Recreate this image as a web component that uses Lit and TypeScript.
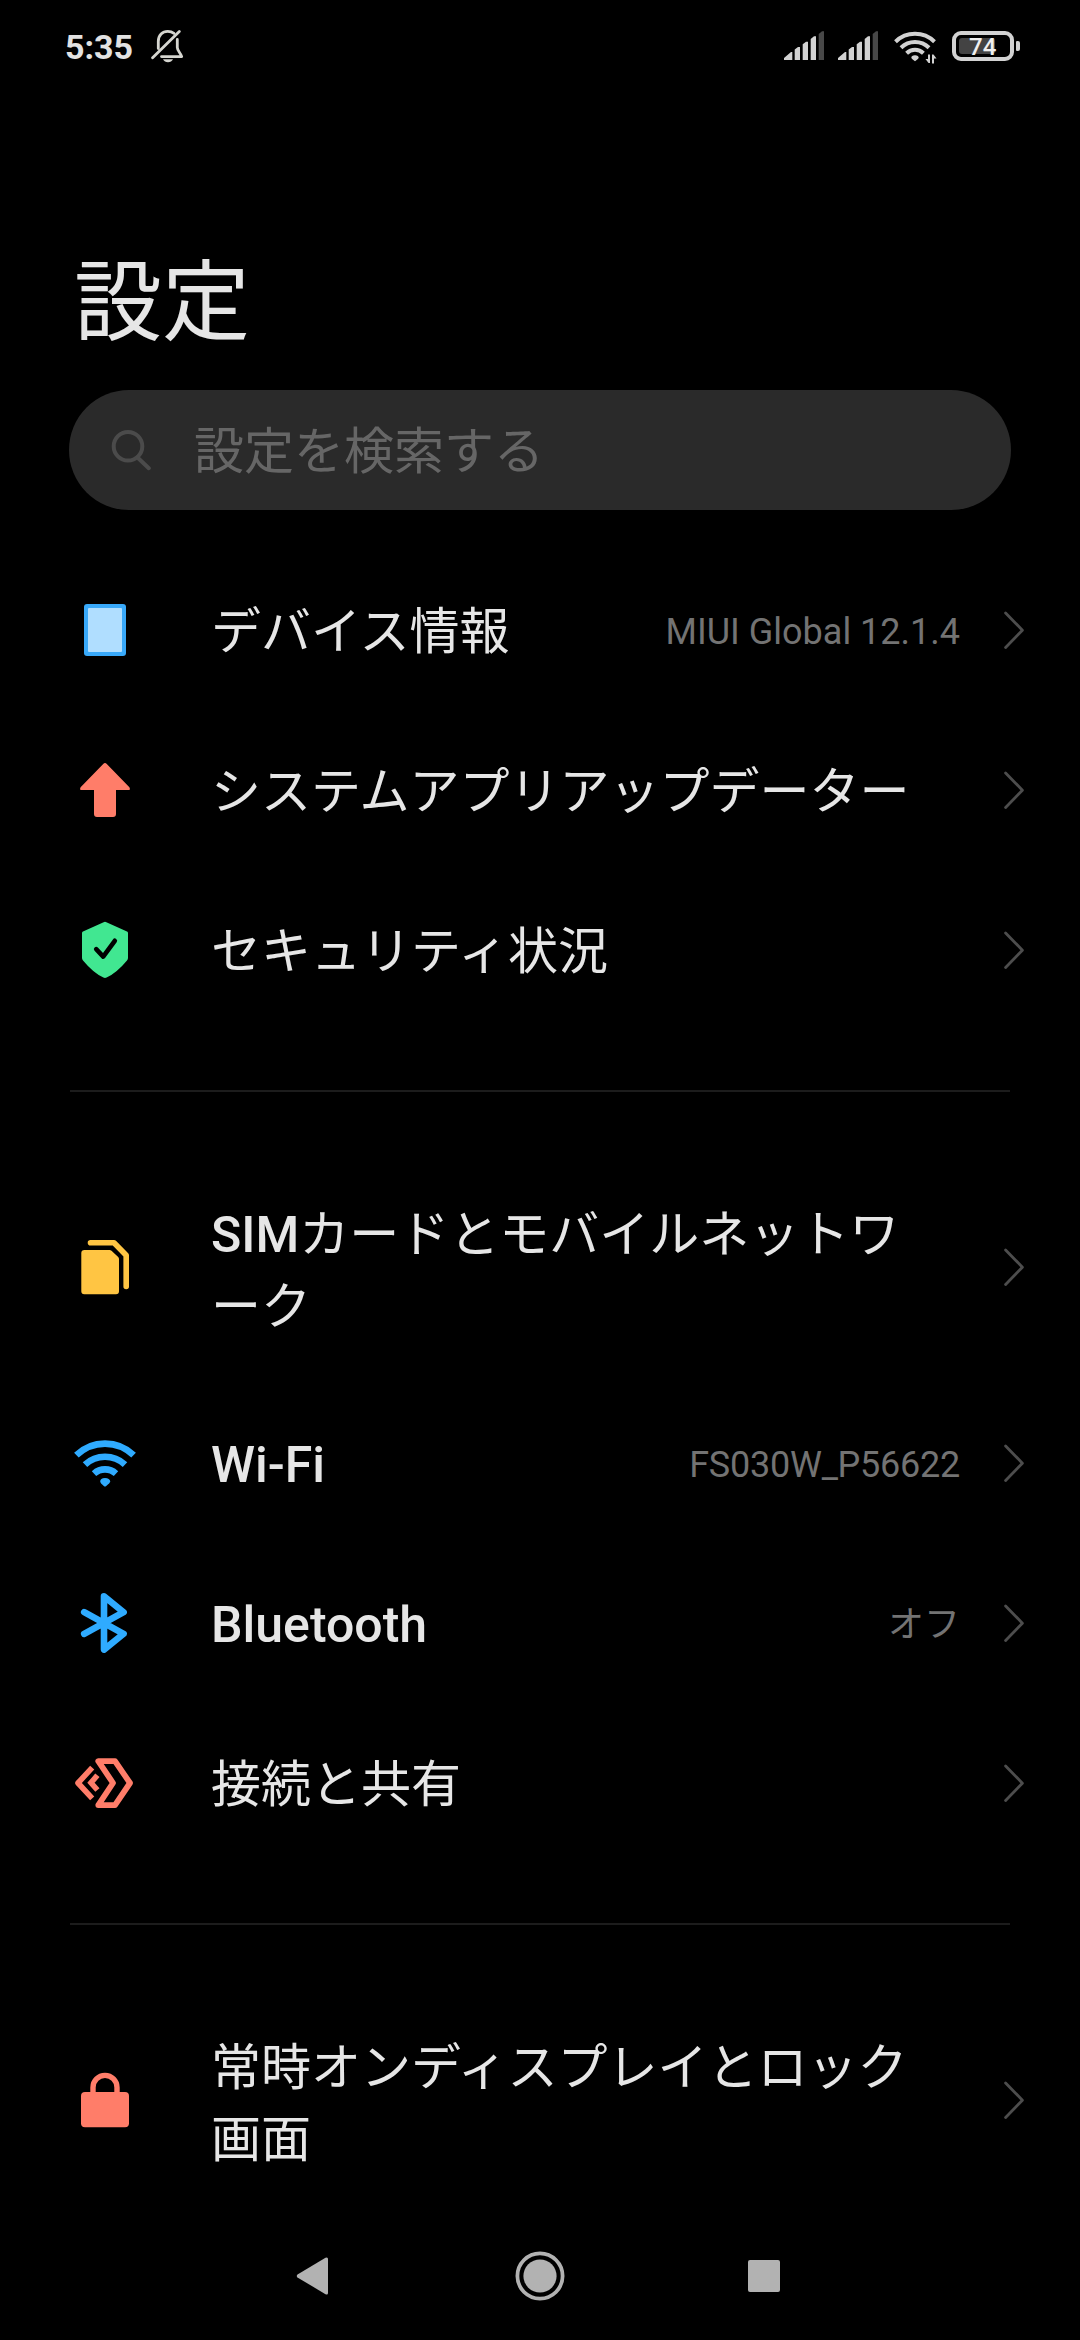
import { LitElement, html, svg, css, nothing, TemplateResult } from "lit";
import { customElement, property } from "lit/decorators.js";
import { classMap } from "lit/directives/class-map.js";

const icons: Record<string, TemplateResult> = {
  device: svg`
    <rect x="15" y="10" width="42" height="52" rx="3" fill="#38a9fa"/>
    <rect x="19" y="14" width="34" height="44" rx="1" fill="#b0deff"/>`,
  update: svg`
    <path fill="#ff7d69" d="M34.2 9.9Q36 8.2 37.8 9.9L60.4 33.2Q61.8 36 59.5 36H47V60Q47 63 44 63H28Q25 63 25 60V36H12.5Q10.2 36 11.6 33.2Z"/>`,
  security: svg`
    <path fill="#41e791" d="M34.6 8.2Q36 7.4 37.4 8.2L58 17.6Q59 18 59 19.2V44Q59 45.4 58 46.4Q48 58.500 37.600 63.500Q36 64.300 34.400 63.500Q24 58.500 14 46.400Q13 45.400 13 44V19.200Q13 18 14 17.600Z"/>
    <path d="M27.200 35.200L34.200 42.600L45.800 26.800" fill="none" stroke="#000" stroke-width="4.600" stroke-linecap="round" stroke-linejoin="round"/>`,
  sim: svg`
    <path fill="#ffc543" d="M15.500 19H40.500Q41.700 19 42.500 19.800L49.200 26Q50 26.800 50 28V60.300Q50 63.300 47 63.300H15.300Q12.300 63.300 12.300 60.300V22Q12.300 19 15.500 19Z"/>
    <path d="M21.500 11.700H45L57.200 24.200V55.500" fill="none" stroke="#ffc543" stroke-width="5.600" stroke-linecap="round" stroke-linejoin="round"/>`,
  wifi: svg`
    <g fill="none" stroke="#2fabff" stroke-width="6.600">
      <path d="M7.400 28.200A41 41 0 0 1 64.600 28.200"/>
      <path d="M16 37.600A29.500 29.500 0 0 1 56 37.600"/>
      <path d="M25 46.600A16.500 16.500 0 0 1 47 46.600"/>
    </g>
    <path fill="#2fabff" d="M31.200 54.500Q31.200 51 36 51T41.300 54.500Q41 56 37.200 59Q36 60 34.800 59Q31.200 56 31.200 54.500Z"/>`,
  bluetooth: svg`
    <path d="M15.200 25.200L54.600 46.800L35 62.600V9.200L54.600 25.200L15.200 46.800" fill="none" stroke="#2fabff" stroke-width="6.600" stroke-linecap="round" stroke-linejoin="round"/>`,
  share: svg`
    <g fill="none" stroke="#ff7d69" stroke-linejoin="round">
      <path stroke-width="5.800" d="M29.300 14.200H46L61 36L46 58.100H29.300L44 36Z"/>
      <path stroke-width="5.600" d="M23.200 20.600L9 36L23.200 51.400"/>
      <path stroke-width="5.600" stroke-linejoin="miter" d="M28.400 28.200L22 35.800L28.400 43"/>
    </g>`,
  lock: svg`
    <rect x="12" y="28" width="48" height="35.300" rx="4" fill="#ff7d69"/>
    <path d="M24 30V23.400A12 12 0 0 1 48 23.400V30" fill="none" stroke="#ff7d69" stroke-width="5.400"/>`,
};

@customElement("settings-row")
class SettingsRow extends LitElement {
  @property() icon = "";
  @property() latin = "";
  /** Lines of the label, shown one below the other. */
  @property({ attribute: false }) lines: string[] = [];
  @property() value = "";

  static styles = css`
    :host { display: flex; align-items: center; min-height: 160px; padding: 40px 56px 40px 69px; box-sizing: border-box; }
    .icon { width: 72px; height: 72px; flex: none; display: block; }
    .label { margin-left: 70px; padding-top: 4px; font-size: 50px; line-height: 72px; color: #e6e6e6; white-space: nowrap; flex: none; }
    .double { padding-top: 8px; }
    .line { height: 72px; }
    .latin { font-weight: 500; }
    .value { flex: 1; padding-top: 3px; text-align: right; font-size: 36px; line-height: 50px; color: #737373; white-space: nowrap; }
    .tight { letter-spacing: -.25px; }
    .chevron { flex: none; width: 20px; height: 38px; margin-left: 44px; display: block; }
  `;

  render() {
    return html`
      <svg class="icon" viewBox="0 0 72 72">${icons[this.icon]}</svg>
      <div class=${classMap({ label: true, double: this.lines.length > 1 })}>
        ${this.lines.map((line, i) => html`<div class="line">${i === 0 && this.latin ? html`<span class="latin">${this.latin}</span>` : nothing}${line}</div>`)}
      </div>
      <div class=${classMap({ value: true, tight: this.value.includes("_") })}>${this.value}</div>
      <svg class="chevron" viewBox="0 0 20 38"><path d="M1.600 1.900L18.400 19.200L1.600 36.500" fill="none" stroke="#4d4d4d" stroke-width="2.800" stroke-linecap="round" stroke-linejoin="round"/></svg>
    `;
  }
}

interface Row { icon: string; latin?: string; lines: string[]; value?: string; }

const groups: Row[][] = [
  [
    { icon: "device", lines: ["デバイス情報"], value: "MIUI Global 12.1.4" },
    { icon: "update", lines: ["システムアプリアップデーター"] },
    { icon: "security", lines: ["セキュリティ状況"] },
  ],
  [
    { icon: "sim", latin: "SIM", lines: ["カードとモバイルネットワ", "ーク"] },
    { icon: "wifi", latin: "Wi-Fi", lines: [""], value: "FS030W_P56622" },
    { icon: "bluetooth", latin: "Bluetooth", lines: [""], value: "オフ" },
    { icon: "share", lines: ["接続と共有"] },
  ],
  [{ icon: "lock", lines: ["常時オンディスプレイとロック", "画面"] }],
];

const signal = html`
  <svg class="signal" viewBox="0 0 40 29">
    <path fill="#d2d2d2" d="M0 29V27L7 21H8.300V29ZM10.700 29V18.500L14 16H16V29ZM18.700 29V13.300L22 10.800H24V29ZM26.700 29V8L30 5.300H32V29Z"/>
    <path fill="#484848" d="M34.700 29V3L38 .3H40V29Z"/>
  </svg>`;

@customElement("app-root")
class AppRoot extends LitElement {
  static styles = css`
    :host { display: flex; flex-direction: column; width: 1080px; height: 2340px; overflow: hidden; background: #000; font-family: Roboto, "Noto Sans CJK JP", sans-serif; }
    svg { display: block; flex: none; }
    .status { display: flex; align-items: flex-start; height: 92px; padding: 0 60px 0 65px; box-sizing: border-box; flex: none; }
    .time { margin-top: 27px; width: 86px; font-size: 34px; font-weight: 700; line-height: 40px; color: #e2e2e2; }
    .bell { width: 34px; height: 36px; margin-top: 29px; }
    .system { display: flex; margin-left: auto; margin-top: 31px; }
    .signal { width: 40px; height: 29px; margin-right: 14px; }
    .net { width: 46px; height: 34px; margin: 0 12px 0 2px; }
    .battery { display: flex; align-items: center; width: 68px; height: 30px; }
    .cell { display: flex; align-items: center; width: 62px; height: 30px; box-sizing: border-box; border: 4px solid #d2d2d2; border-radius: 9px; padding-left: 3px; }
    .charge { display: flex; width: 36px; height: 16px; border-radius: 3px; background: #434343; align-items: center; }
    .percent { margin-left: 10px; padding-top: 2px; font-size: 24px; font-weight: 500; line-height: 24px; color: #f0f0f0; }
    .nub { width: 4px; height: 10px; margin-left: 2px; border-radius: 1px 2px 2px 1px; background: #d2d2d2; }
    .title { margin: 147px 0 0 74px; font-size: 88px; line-height: 128px; font-weight: 400; color: #e6e6e6; flex: none; }
    .search { display: flex; align-items: center; flex: none; height: 120px; margin: 23px 69px 40px; border-radius: 60px; background: #2a2a2a; padding-left: 42px; box-sizing: border-box; }
    .lens { width: 42px; height: 42px; }
    .hint { margin-left: 41px; padding-top: 3px; font-size: 50px; line-height: 72px; color: #666; }
    .list { flex: none; }
    .rule { height: 2px; margin: 60px 70px 59px; border: 0; background: #1c1c1c; }
    .nav { display: flex; align-items: center; flex: none; height: 119px; padding-left: 296px; }
    .back { width: 32px; height: 40px; }
    .home { width: 50px; height: 50px; margin-left: 186.500px; }
    .recent { width: 32px; height: 32px; border-radius: 2px; background: #b2b2b2; margin-left: 183.500px; }
  `;

  render() {
    return html`
      <div class="status">
        <div class="time">5:35</div>
        <svg class="bell" viewBox="0 0 34 36">
          <g fill="none" stroke="#d6d6d0" stroke-width="2.800" stroke-linecap="round" stroke-linejoin="round">
            <path d="M1.600 28.700L28.300 2.500"/>
            <path d="M7.300 19.500V12.500C7.300 6 11.500 2.400 16.700 2.400C19.500 2.400 21.500 3.200 23 4.300"/>
            <path d="M26.300 10.500V18.500C26.300 22 30 24.500 30.700 27.600H10.500"/>
          </g>
          <path fill="#d6d6d0" d="M12 30.200H22Q20.500 33.200 17 33.200T12 30.200Z"/>
        </svg>
        <div class="system">
          ${signal}${signal}
          <svg class="net" viewBox="0 0 46 34">
            <g fill="none" stroke="#d2d2d2" stroke-width="4">
              <path d="M1.500 10.700A28 28 0 0 1 40.500 10.700"/>
              <path d="M7 16.700A20 20 0 0 1 35 16.700"/>
              <path d="M12.600 22.300A12 12 0 0 1 29.400 22.300"/>
            </g>
            <path fill="#d2d2d2" d="M17.300 27Q17.300 24.200 21 24.200T24.700 27Q24.300 28 21 30.300Q17.700 28 17.300 27Z"/>
            <path fill="#d2d2d2" d="M34 23.500H36V32H34.500L31.500 28H34ZM38 32.500V23.500H39.500L42.500 27.500H40V32.500Z"/>
          </svg>
          <div class="battery">
            <div class="cell"><div class="charge"><span class="percent">74</span></div></div>
            <div class="nub"></div>
          </div>
        </div>
      </div>
      <div class="title">設定</div>
      <div class="search">
        <svg class="lens" viewBox="0 0 42 42"><g fill="none" stroke="#4b4b4b" stroke-width="4"><circle cx="17" cy="17.300" r="14.300"/><path d="M26.500 28.500L37.800 39.200" stroke-linecap="round"/></g></svg>
        <div class="hint">設定を検索する</div>
      </div>
      <div class="list">
        ${groups.map((rows, i) => html`
          ${i ? html`<hr class="rule">` : nothing}
          ${rows.map((r) => html`<settings-row .icon=${r.icon} .latin=${r.latin ?? ""} .lines=${r.lines} .value=${r.value ?? ""}></settings-row>`)}
        `)}
      </div>
      <div class="nav">
        <svg class="back" viewBox="0 0 32 40"><path fill="#b2b2b2" d="M1.500 18.600L29.500 1.800Q32 .8 32 3V37Q32 39.200 29.500 38.200L1.500 21.400Q0 20 1.500 18.600Z"/></svg>
        <svg class="home" viewBox="0 0 50 50"><circle cx="25" cy="25" r="22.600" fill="none" stroke="#b2b2b2" stroke-width="3.800"/><circle cx="25" cy="25" r="16.600" fill="#b2b2b2"/></svg>
        <div class="recent"></div>
      </div>
    `;
  }
}
